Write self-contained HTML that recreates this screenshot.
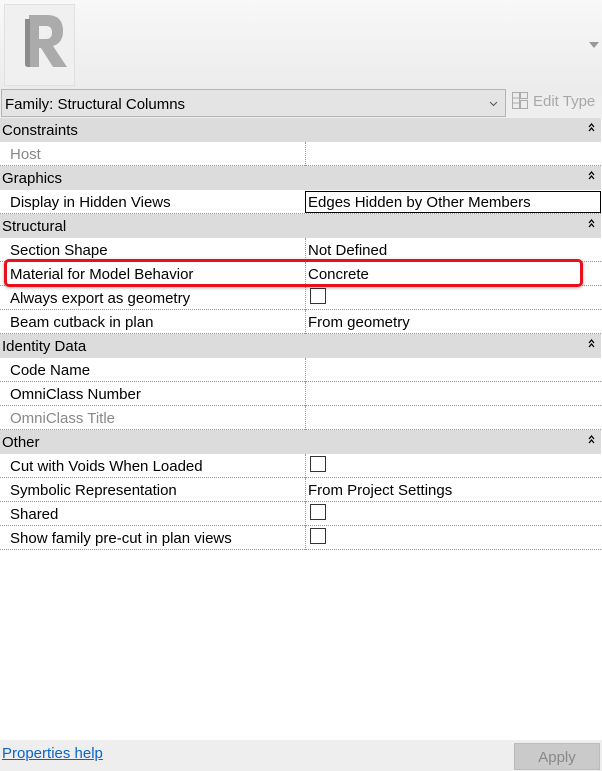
<!DOCTYPE html>
<html><head><style>
*{margin:0;padding:0;box-sizing:border-box}
body{width:602px;height:771px;background:#fff;font-family:"Liberation Sans",sans-serif;font-size:14px;color:#000;position:relative;overflow:hidden}
.top{position:absolute;left:0;top:0;width:602px;height:118px;background:linear-gradient(#f8f8f8,#ececec 75%,#efefef)}
.thumb{position:absolute;left:4px;top:4px;width:71px;height:82px;border:1px solid #e0e0e0;background:#f0f0f0}
.dd{position:absolute;left:1px;top:89px;width:505px;height:28px;border:1px solid #b4b4b4;background:#e4e4e4;padding:6px 3px;font-size:15px}
.et{position:absolute;left:512px;top:92px;color:#a8a8a8;font-size:15px}
.row{position:absolute;left:0;width:601px;height:24px;border-bottom:1px dotted #999}
.h{background:#dcdcdc;border-bottom:none;padding:4px 2px;font-size:15px}
.h svg{position:absolute;right:6px;top:5px}
.l{position:absolute;left:10px;top:4px;font-size:15px}
.v{position:absolute;left:305px;top:0;height:24px;right:0;border-left:1px dotted #999;padding:4px 2px;font-size:15px}
.g{color:#888}
.cb{display:inline-block;width:16px;height:16px;border:1px solid #333;margin:-2px 0 0 2px;vertical-align:top}
.bot{position:absolute;left:0;top:740px;width:602px;height:31px;background:#eeeeee}
.help{position:absolute;left:2px;top:5px;color:#0a64c8;text-decoration:underline;font-size:15px}
.ap{position:absolute;left:514px;top:3px;width:86px;height:27px;background:#cacaca;border:1px solid #bbb;color:#888;text-align:center;padding-top:5px;font-size:15px}
.red{position:absolute;left:4px;top:259px;width:579px;height:28px;border:3px solid #e8101a;border-radius:5px;box-shadow:0 1px 3px rgba(0,0,0,.3)}
</style></head><body>
<div class="top">
<div class="thumb"><svg width="71" height="82" viewBox="0 0 71 82"><path d="M24 10 h18 q16 0 16 16 q0 12-10 15 l14 21 h-14 l-12-19 h-2 v19 h-10z M34 21 v13 h7 q6 0 6-6.5 q0-6.5-6-6.5z" fill="#ababab"/><path d="M20 14 h5 v48 h-2 q-3 0-3-3z" fill="#8c8c8c"/></svg></div>
<div style="position:absolute;right:3px;top:42px;width:0;height:0;border-left:5px solid transparent;border-right:5px solid transparent;border-top:6px solid #999"></div>
</div>
<div class="dd">Family: Structural Columns<svg style="position:absolute;right:7px;top:11px" width="9" height="6"><path d="M1 1 L4.5 4.5 L8 1" stroke="#555" fill="none"/></svg></div>
<div class="et"><svg width="16" height="17" style="vertical-align:-3px;margin-right:5px"><rect x="0.5" y="0.5" width="7" height="16" fill="none" stroke="#aaa"/><rect x="8.5" y="0.5" width="7" height="6" fill="none" stroke="#aaa"/><rect x="8.5" y="8.5" width="7" height="8" fill="none" stroke="#aaa"/><path d="M1 6h6M1 11h6" stroke="#aaa"/></svg>Edit Type</div>

<div class="row h" style="top:118px">Constraints<svg width="7" height="9"><path d="M1 4 L3.5 1 L6 4 M1 8 L3.5 5 L6 8" stroke="#000" stroke-width="1.3" fill="none"/></svg></div>
<div class="row" style="top:142px"><span class="l g">Host</span><div class="v"></div></div>
<div class="row h" style="top:166px">Graphics<svg width="7" height="9"><path d="M1 4 L3.5 1 L6 4 M1 8 L3.5 5 L6 8" stroke="#000" stroke-width="1.3" fill="none"/></svg></div>
<div class="row" style="top:190px"><span class="l">Display in Hidden Views</span><div class="v" style="border:1px solid #000;top:1px;height:22px;padding-top:2px">Edges Hidden by Other Members</div></div>
<div class="row h" style="top:214px">Structural<svg width="7" height="9"><path d="M1 4 L3.5 1 L6 4 M1 8 L3.5 5 L6 8" stroke="#000" stroke-width="1.3" fill="none"/></svg></div>
<div class="row" style="top:238px"><span class="l">Section Shape</span><div class="v">Not Defined</div></div>
<div class="row" style="top:262px"><span class="l">Material for Model Behavior</span><div class="v">Concrete</div></div>
<div class="row" style="top:286px"><span class="l">Always export as geometry</span><div class="v"><span class="cb"></span></div></div>
<div class="row" style="top:310px"><span class="l">Beam cutback in plan</span><div class="v">From geometry</div></div>
<div class="row h" style="top:334px">Identity Data<svg width="7" height="9"><path d="M1 4 L3.5 1 L6 4 M1 8 L3.5 5 L6 8" stroke="#000" stroke-width="1.3" fill="none"/></svg></div>
<div class="row" style="top:358px"><span class="l">Code Name</span><div class="v"></div></div>
<div class="row" style="top:382px"><span class="l">OmniClass Number</span><div class="v"></div></div>
<div class="row" style="top:406px"><span class="l g">OmniClass Title</span><div class="v"></div></div>
<div class="row h" style="top:430px">Other<svg width="7" height="9"><path d="M1 4 L3.5 1 L6 4 M1 8 L3.5 5 L6 8" stroke="#000" stroke-width="1.3" fill="none"/></svg></div>
<div class="row" style="top:454px"><span class="l">Cut with Voids When Loaded</span><div class="v"><span class="cb"></span></div></div>
<div class="row" style="top:478px"><span class="l">Symbolic Representation</span><div class="v">From Project Settings</div></div>
<div class="row" style="top:502px"><span class="l">Shared</span><div class="v"><span class="cb"></span></div></div>
<div class="row" style="top:526px"><span class="l">Show family pre-cut in plan views</span><div class="v"><span class="cb"></span></div></div>
<div class="red"></div>
<div class="bot"><span class="help">Properties help</span><div class="ap">Apply</div></div>
</body></html>
